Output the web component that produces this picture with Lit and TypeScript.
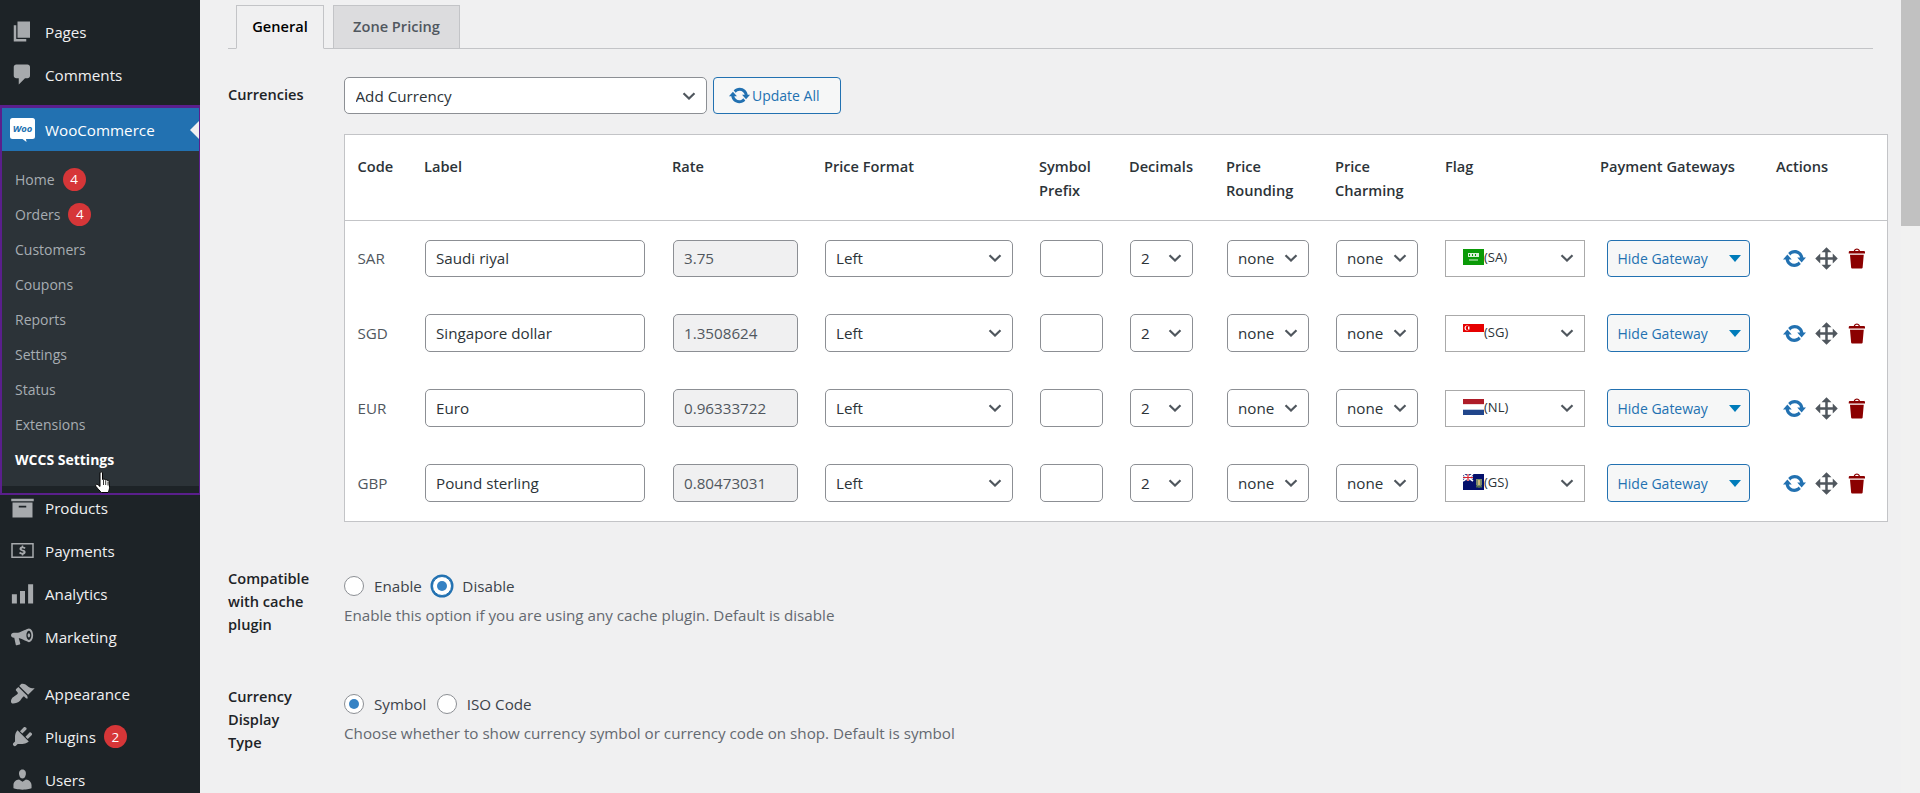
import { LitElement, html, css, svg } from 'lit';
import { customElement } from 'lit/decorators.js';

// dashicons-like glyphs on a 20x20 grid
const ICONS: Record<string, ReturnType<typeof svg>> = {
  pages: svg`<path d="M6 15V2h10v13H6zm-1 1h8v2H3V5h2v11z"/>`,
  comments: svg`<path d="M5 2h9q.82 0 1.41.59T16 4v7q0 .82-.59 1.41T14 13h-2l-5 5v-5H5q-.82 0-1.41-.59T3 11V4q0-.82.59-1.41T5 2z"/>`,
  products: svg`<path d="M1 3h18v2H1zM2 6h16v12H2zm5 2.5V10h6V8.5z" fill-rule="evenodd"/>`,
  payments: svg`<path fill-rule="evenodd" d="M1 4h18v12H1zm1.2 1.2v9.6h15.6V5.2zM10.6 6v.9c.8.1 1.4.4 1.9.8l-.8 1.1c-.5-.4-1-.6-1.6-.6-.5 0-.8.2-.8.5s.3.5 1 .7c1.300.3 2.200.8 2.200 2 0 1-.7 1.700-1.900 1.900V14h-1.200v-.9c-.9-.1-1.700-.5-2.200-1l.9-1.100c.5.500 1.100.8 1.800.8.600 0 .9-.2.900-.6 0-.3-.3-.5-1.100-.7-1.200-.3-2.100-.8-2.100-1.900 0-1 .7-1.700 1.800-1.900V6z"/>`,
  analytics: svg`<path d="M1.500 10.500h4V18h-4zM8 8h4v10H8zM14.500 2.500h4V18h-4z"/>`,
  marketing: svg`<path fill-rule="evenodd" d="M18.500 9c0 3-1.500 5.500-3.400 5.500-.9 0-5-2.500-8.100-3.300l1.200 4.300c.1.400-.1.800-.5.900l-2.200.6c-.4.100-.8-.100-.9-.500L3.400 11H3c-1.200 0-2.200-.9-2.200-2s1-2 2.200-2h3.200c3-.7 7.800-3.500 8.900-3.500 1.900 0 3.400 2.500 3.400 5.500zm-3.400-3.700c-1.100 0-2 1.700-2 3.700s.9 3.700 2 3.700 2-1.700 2-3.700-.9-3.700-2-3.700zm0 2c.6 0 1 .8 1 1.700s-.4 1.700-1 1.700-1-.8-1-1.700.4-1.700 1-1.700z"/>`,
  appearance: svg`<path d="M14.480 11.060L7.410 3.990l1.500-1.500c.5-.56 2.300-.47 3.510.32 1.210.8 1.430 1.280 2.910 2.100 1.180.64 2.450 1.260 4.450.85zm-.71.71L6.700 4.700 4.930 6.470c-.39.39-.39 1.020 0 1.410l1.060 1.060c.39.39.39 1.030 0 1.420-.6.6-1.430 1.110-2.210 1.690-.35.26-.7.53-1.010.84C1.430 13.230.1 16.400 1.200 17.500c1.100 1.100 5.270-.2 6.590-1.540.32-.32.58-.66.84-1.010.58-.78 1.090-1.610 1.690-2.210.39-.39 1.020-.39 1.410 0l1.060 1.060c.39.39 1.020.39 1.410 0z"/>`,
  plugins: svg`<path d="M13.110 4.360L9.870 7.600 8 5.730l3.240-3.240c.35-.34 1.050-.2 1.560.32.52.51.66 1.210.31 1.550zm-8 1.770l.91-1.120 9.010 9.010-1.190.84c-.71.71-2.630 1.160-3.820 1.160H6.140L4.900 17.260c-.59.59-1.540.59-2.120 0-.59-.58-.59-1.530 0-2.120l1.240-1.240v-3.880c0-1.130.4-3.190 1.090-3.890zm7.260 3.970l3.240-3.240c.34-.35 1.040-.21 1.550.31.52.51.66 1.210.31 1.550l-3.240 3.250z"/>`,
  users: svg`<path d="M10 9.250c-2.270 0-2.730-3.440-2.730-3.440C7 4.020 7.820 2 9.970 2c2.160 0 2.980 2.020 2.710 3.810 0 0-.41 3.440-2.680 3.440zm0 2.570L12.720 10c2.390 0 4.520 2.330 4.520 4.530v2.490s-3.650 1.130-7.240 1.130c-3.650 0-7.240-1.130-7.240-1.130v-2.490c0-2.250 1.940-4.480 4.470-4.480z"/>`,
  update: svg`<path d="M10.200 3.280c3.530 0 6.430 2.610 6.920 6h2.080l-3.500 4-3.500-4h2.320c-.45-1.970-2.210-3.440-4.320-3.440-1.450 0-2.730.71-3.540 1.780L4.950 5.660C6.230 4.200 8.110 3.280 10.200 3.280zm-.4 13.440c-3.520 0-6.430-2.610-6.920-6H.8l3.500-4c1.170 1.330 2.330 2.670 3.500 4H5.480c.45 1.970 2.210 3.440 4.320 3.440 1.450 0 2.730-.71 3.540-1.780l1.710 1.950c-1.280 1.460-3.150 2.380-5.250 2.380z"/>`,
  move: svg`<path d="M19 10l-4 4v-3h-4v4h3l-4 4-4-4h3v-4H5v3l-4-4 4-4v3h4V5H6l4-4 4 4h-3v4h4V6z"/>`,
  trash: svg`<path d="M12 4h3c.6 0 1 .4 1 1v1H3V5c0-.6.5-1 1-1h3c.2-1.100 1.300-2 2.500-2s2.300.9 2.500 2zM8 4h3c-.2-.6-.9-1-1.500-1S8.200 3.400 8 4zM4 7h11l-.9 10.100c0 .5-.5.9-1 .9H5.900c-.5 0-.9-.4-1-.9L4 7z"/>`,
};

const icon = (name: string, cls = '') =>
  html`<svg class="ico ${cls}" viewBox="0 0 20 20" fill="currentColor" aria-hidden="true">${ICONS[name]}</svg>`;

const FLAGS: Record<string, ReturnType<typeof svg>> = {
  SA: svg`<rect width="21" height="16" fill="#0a9a07"/><rect x="5" y="4" width="11" height="4" fill="#d7efd6"/><rect x="6" y="5" width="1" height="2" fill="#0a9a07"/><rect x="9" y="5" width="1" height="2" fill="#0a9a07"/><rect x="12" y="5" width="1" height="2" fill="#0a9a07"/><rect x="6" y="10.500" width="9" height="1" fill="#d7efd6"/>`,
  SG: svg`<rect width="21" height="8" fill="#e60000"/><rect y="8" width="21" height="8" fill="#fff"/><circle cx="4" cy="4" r="2.500" fill="#fff"/><circle cx="5" cy="4" r="2.300" fill="#e60000"/><rect x="5" y="2.500" width="1.500" height="3" fill="#fff"/>`,
  NL: svg`<rect width="21" height="5.400" fill="#ae1c28"/><rect y="5.400" width="21" height="5.300" fill="#fff"/><rect y="10.700" width="21" height="5.300" fill="#21468b"/>`,
  GS: svg`<rect width="21" height="16" fill="#04106b"/><path d="M0 0l10 7M10 0L0 7" stroke="#fff" stroke-width="1.600"/><path d="M5 0v7M0 3.500h10" stroke="#fff" stroke-width="2.400"/><path d="M5 0v7M0 3.500h10" stroke="#d8202e" stroke-width="1.200"/><path d="M13 5h6v6l-3 3-3-3z" fill="#7a8a6a"/><path d="M15 6h2v5h-2z" fill="#c9b77a"/><path d="M13 12h6v1.500h-6z" fill="#4f6b4c"/>`,
};

@customElement('wp-sidebar')
class WpSidebar extends LitElement {
  static styles = css`
    :host {
      display: block;
      position: relative;
      width: 200px;
      flex: none;
      height: 793px;
      overflow: hidden;
      background: #1d2327;
      color: #f0f0f1;
      font-size: var(--menu-size);
    }
    .top { padding-top: 10px; }
    .item {
      position: relative;
      display: flex;
      align-items: center;
      height: 43px;
    }
    .item > .slot {
      width: 45px;
      flex: none;
      display: flex;
      justify-content: center;
      color: #a7aaad;
    }
    .ico { width: 25px; height: 25px; display: block; }
    .woo {
      margin-top: 12px;
      background: #2271b1;
      color: #fff;
    }
    .woo .slot { color: #fff; }
    .woo::after {
      content: '';
      position: absolute;
      right: 0;
      top: 50%;
      margin-top: -10px;
      border: 10px solid transparent;
      border-right-color: #f0f0f1;
      border-left-width: 0;
    }
    .logo { width: 25px; height: 25px; display: block; }
    .logo text {
      font: italic 700 9.5px var(--font);
      fill: #2271b1;
    }
    .sub {
      background: #2c3338;
      padding: 10.500px 0 9.500px;
    }
    .sub .row {
      display: flex;
      align-items: center;
      height: 35px;
      padding-left: 15px;
      color: #a7adb2;
      font-size: var(--sub-size);
    }
    .sub .row.on { color: #fff; font-weight: 700; }
    .badge {
      display: inline-flex;
      align-items: center;
      justify-content: center;
      width: 23px;
      height: 23px;
      border-radius: 50%;
      background: #d63638;
      color: #fff;
      font-size: 13.500px;
      margin-left: 8px;
    }
    .gap { height: 14px; }
    .frame {
      position: absolute;
      left: 0;
      top: 105px;
      width: 201px;
      height: 390px;
      box-sizing: border-box;
      border: solid #5a1f8c;
      border-width: 3px 2px 2px 2px;
      pointer-events: none;
    }
    .hand {
      position: absolute;
      left: 95px;
      top: 471px;
      width: 18px;
      height: 23px;
    }
  `;

  private item(name: string, label: string, badge?: string) {
    return html`<div class="item">
      <span class="slot">${icon(name)}</span>
      <span>${label}</span>
      ${badge ? html`<span class="badge">${badge}</span>` : ''}
    </div>`;
  }

  render() {
    const sub = [
      ['Home', '4'], ['Orders', '4'], ['Customers'], ['Coupons'], ['Reports'],
      ['Settings'], ['Status'], ['Extensions'],
    ];
    return html`
      <div class="top">
        ${this.item('pages', 'Pages')}
        ${this.item('comments', 'Comments')}
      </div>
      <div class="item woo">
        <span class="slot">
          <svg class="logo" viewBox="0 0 25 25" aria-hidden="true">
            <path fill="#fff" d="M2.500 1h20A2.500 2.500 0 0 1 25 3.500v16a2.500 2.500 0 0 1-2.500 2.500H16l.5 3-4-3H2.500A2.500 2.500 0 0 1 0 19.500v-16A2.500 2.500 0 0 1 2.500 1z"/>
            <text x="12.500" y="15" text-anchor="middle">Woo</text>
          </svg>
        </span>
        <span>WooCommerce</span>
      </div>
      <div class="sub">
        ${sub.map(([l, b]) => html`<div class="row">${l}${b ? html`<span class="badge">${b}</span>` : ''}</div>`)}
        <div class="row on">WCCS Settings</div>
      </div>
      ${this.item('products', 'Products')}
      ${this.item('payments', 'Payments')}
      ${this.item('analytics', 'Analytics')}
      ${this.item('marketing', 'Marketing')}
      <div class="gap"></div>
      ${this.item('appearance', 'Appearance')}
      ${this.item('plugins', 'Plugins', '2')}
      ${this.item('users', 'Users')}
      <div class="frame"></div>
      <svg class="hand" viewBox="0 0 18 23" aria-hidden="true">
        <path fill="#fff" stroke="#000" stroke-width="1" stroke-linejoin="round"
          d="M5 2c0-1.600 2.500-1.600 2.500 0v6.500l1-.2c.8-.2 1.500 0 1.700.6.8-.4 1.700-.2 2 .5.900-.3 1.800.1 1.900 1l.4 6c0 2-.6 3.500-1.500 5.100H6.500C5 20 3 18 1 15.500c-.7-1-.4-2 .5-2.200.8-.2 2 .7 3.500 2.200z"/>
        <path stroke="#000" stroke-width=".8" d="M8.500 9v5M10.700 9.500v4.500M13 10.500v4"/>
      </svg>
    `;
  }
}

const CHEVRON = css`url("data:image/svg+xml,%3Csvg xmlns='http://www.w3.org/2000/svg' viewBox='0 0 14 8'%3E%3Cpath d='M1.500 1.200 7 6.500l5.500-5.300' fill='none' stroke='%2350575e' stroke-width='2.200'/%3E%3C/svg%3E")`;

type Currency = { code: string; label: string; rate: string; flag: string };

const CURRENCIES: Currency[] = [
  { code: 'SAR', label: 'Saudi riyal', rate: '3.75', flag: 'SA' },
  { code: 'SGD', label: 'Singapore dollar', rate: '1.3508624', flag: 'SG' },
  { code: 'EUR', label: 'Euro', rate: '0.96333722', flag: 'NL' },
  { code: 'GBP', label: 'Pound sterling', rate: '0.80473031', flag: 'GS' },
];

@customElement('currency-table')
class CurrencyTable extends LitElement {
  static styles = css`
    :host {
      display: block;
      width: 1544px;
      background: #fff;
      border: 1px solid #c3c4c7;
      box-sizing: border-box;
    }
    table {
      width: 100%;
      table-layout: fixed;
      border-collapse: collapse;
    }
    th {
      height: 86px;
      padding: 19px 0 0 12.500px;
      box-sizing: border-box;
      vertical-align: top;
      text-align: left;
      font-weight: 600;
      color: #2c3338;
      line-height: 24px;
      font-size: var(--head-size);
      border-bottom: 1px solid #c3c4c7;
    }
    td {
      height: 75px;
      padding: 0 0 0 12.500px;
      box-sizing: border-box;
      color: #50575e;
      vertical-align: middle;
    }
    input, select {
      display: block;
      box-sizing: border-box;
      height: 37.500px;
      margin: 0 0 0 1px;
      padding: 0 0 0 10px;
      font: inherit;
      color: #2c3338;
      background: #fff;
      border: 1px solid #8c8f94;
      border-radius: 5px;
      outline: none;
    }
    input[readonly] { background: #f0f0f1; color: #50575e; }
    select {
      appearance: none;
      background: #fff ${CHEVRON} no-repeat right 10px center / 14px 8px;
    }
    .w-label { width: 219.500px; }
    .w-rate { width: 125px; }
    .w-format { width: 188px; }
    .w-symbol { width: 62.500px; }
    .w-dec { width: 63px; }
    .w-round { width: 82px; }
    .flag {
      display: flex;
      align-items: center;
      width: 140px;
      height: 37px;
      box-sizing: border-box;
      padding: 0 10px 2px 17px;
      border: 1px solid #aaa;
      color: #2c3338;
      font-size: var(--small-size);
    }
    .flag svg.f { width: 21px; height: 16px; flex: none; }
    .flag svg.c { width: 14px; height: 8px; margin: 2px 0 0 auto; flex: none; }
    .gate {
      display: flex;
      align-items: center;
      justify-content: space-between;
      width: 143px;
      height: 37.500px;
      margin-left: 7px;
      box-sizing: border-box;
      padding: 0 8px 0 9.500px;
      border: 1px solid #2271b1;
      border-radius: 4px;
      background: #f6f7f7;
      color: #2271b1;
      font-size: var(--gate-size);
    }
    .caret {
      width: 0;
      height: 0;
      border: 6.500px solid transparent;
      border-top: 7px solid #007cba;
      border-bottom: 0;
    }
    .acts {
      display: flex;
      align-items: center;
      gap: 6.500px;
      margin-left: 6px;
    }
    .ico { width: 25px; height: 25px; display: block; }
    .blue { color: #2271b1; }
    .grey { color: #50575e; }
    .red { color: #8b0000; }
  `;

  private row(c: Currency) {
    const opt = (v: string) => html`<option>${v}</option>`;
    return html`<tr>
      <td>${c.code}</td>
      <td><input class="w-label" .value=${c.label} /></td>
      <td><input class="w-rate" readonly .value=${c.rate} /></td>
      <td><select class="w-format">${opt('Left')}</select></td>
      <td><input class="w-symbol" /></td>
      <td><select class="w-dec">${opt('2')}</select></td>
      <td><select class="w-round">${opt('none')}</select></td>
      <td><select class="w-round">${opt('none')}</select></td>
      <td>
        <div class="flag">
          <svg class="f" viewBox="0 0 21 16" aria-hidden="true">${FLAGS[c.flag]}</svg>
          <span>(${c.flag})</span>
          <svg class="c" viewBox="0 0 14 8" aria-hidden="true"><path d="M1.500 1.200 7 6.500l5.500-5.300" fill="none" stroke="#50575e" stroke-width="2.200"/></svg>
        </div>
      </td>
      <td><div class="gate"><span>Hide Gateway</span><span class="caret"></span></div></td>
      <td>
        <div class="acts">
          ${icon('update', 'blue')}${icon('move', 'grey')}${icon('trash', 'red')}
        </div>
      </td>
    </tr>`;
  }

  render() {
    const widths = [66.5, 248, 152, 215, 90, 97, 109, 110, 155, 176, 123.5];
    return html`<table>
      <colgroup>${widths.map((w) => html`<col style="width:${w}px" />`)}</colgroup>
      <thead>
        <tr>
          <th>Code</th><th>Label</th><th>Rate</th><th>Price Format</th>
          <th>Symbol<br />Prefix</th><th>Decimals</th><th>Price<br />Rounding</th>
          <th>Price<br />Charming</th><th>Flag</th><th>Payment Gateways</th><th>Actions</th>
        </tr>
      </thead>
      <tbody>${CURRENCIES.map((c) => this.row(c))}</tbody>
    </table>`;
  }
}

@customElement('app-root')
export class AppRoot extends LitElement {
  static styles = css`
    :host {
      --font: 'Open Sans', 'Noto Sans', sans-serif;
      --menu-size: 15.2px;
      --sub-size: 14px;
      --body-size: 15.2px;
      --head-size: 14.6px;
      --small-size: 13px;
      --gate-size: 14px;
      display: flex;
      height: 793px;
      overflow: hidden;
      background: #f0f0f1;
      color: #3c434a;
      font-family: var(--font);
      font-size: var(--body-size);
    }
    main {
      flex: 1;
      min-width: 0;
      padding: 5px 0 0 28px;
    }
    .tabs {
      display: flex;
      gap: 9px;
      width: 1645px;
      height: 44px;
      box-sizing: border-box;
      padding-left: 8px;
      border-bottom: 1px solid #c3c4c7;
    }
    .tab {
      display: flex;
      align-items: center;
      justify-content: center;
      height: 44px;
      box-sizing: border-box;
      padding-bottom: 2px;
      border: 1px solid #c3c4c7;
      background: #dcdcde;
      color: #50575e;
      font-weight: 600;
      font-size: var(--head-size);
    }
    .tab.on {
      width: 88px;
      background: #f0f0f1;
      color: #000;
      border-bottom-color: #f0f0f1;
    }
    .tab.off { width: 127px; }
    .field {
      display: grid;
      grid-template-columns: 116px auto;
    }
    .name {
      font-weight: 600;
      color: #1d2327;
      font-size: var(--head-size);
      line-height: 23px;
    }
    .add {
      display: flex;
      gap: 6px;
      height: 37px;
      margin-bottom: 19.500px;
    }
    .add select {
      appearance: none;
      width: 363px;
      height: 37px;
      box-sizing: border-box;
      padding: 0 0 0 10.500px;
      font: inherit;
      color: #2c3338;
      border: 1px solid #8c8f94;
      border-radius: 5px;
      background: #fff ${CHEVRON} no-repeat right 10px center / 14px 8px;
    }
    .update {
      display: flex;
      align-items: center;
      gap: 1px;
      width: 128px;
      box-sizing: border-box;
      padding-left: 14px;
      border: 1px solid #2271b1;
      border-radius: 4px;
      background: #f6f7f7;
      color: #2271b1;
      font-size: var(--gate-size);
    }
    .update svg { width: 23px; height: 23px; flex: none; }
    .radios {
      display: flex;
      align-items: center;
      height: 23px;
    }
    .radios label {
      display: flex;
      align-items: center;
      gap: 10px;
      margin-right: 10.500px;
    }
    input[type='radio'] {
      appearance: none;
      width: 20px;
      height: 20px;
      margin: 0;
      background: #fff;
      border: 1px solid #8c8f94;
      border-radius: 50%;
      display: grid;
      place-content: center;
    }
    input[type='radio']:checked::before {
      content: '';
      width: 10px;
      height: 10px;
      border-radius: 50%;
      background: #3582c4;
    }
    input.ring {
      border-color: #2271b1;
      box-shadow: 0 0 0 1.500px #2271b1;
    }
    .desc {
      margin: 7px 0 0;
      color: #646970;
    }
    .f1 { margin-top: 28px; }
    .f2 { margin-top: 45px; }
    .f2 .radios, .f3 .radios { margin-top: 8px; }
    .f3 { margin-top: 49px; }
    .bar {
      width: 19px;
      flex: none;
      background: #f1f1f1;
    }
    .bar div { height: 226px; background: #c1c1c1; }
  `;

  render() {
    return html`
      <wp-sidebar></wp-sidebar>
      <main>
        <div class="tabs">
          <div class="tab on">General</div>
          <div class="tab off">Zone Pricing</div>
        </div>
        <div class="field f1">
          <div class="name" style="padding-top:6px">Currencies</div>
          <div>
            <div class="add">
              <select><option>Add Currency</option></select>
              <div class="update">
                <svg viewBox="0 0 20 20" fill="currentColor" aria-hidden="true">${ICONS.update}</svg>
                <span>Update All</span>
              </div>
            </div>
            <currency-table></currency-table>
          </div>
        </div>
        <div class="field f2">
          <div class="name">Compatible<br />with cache<br />plugin</div>
          <div>
            <div class="radios">
              <label><input type="radio" name="cache" />Enable</label>
              <label><input class="ring" type="radio" name="cache" checked />Disable</label>
            </div>
            <p class="desc">Enable this option if you are using any cache plugin. Default is disable</p>
          </div>
        </div>
        <div class="field f3">
          <div class="name">Currency<br />Display<br />Type</div>
          <div>
            <div class="radios">
              <label><input type="radio" name="display" checked />Symbol</label>
              <label><input type="radio" name="display" />ISO Code</label>
            </div>
            <p class="desc">Choose whether to show currency symbol or currency code on shop. Default is symbol</p>
          </div>
        </div>
      </main>
      <div class="bar"><div></div></div>
    `;
  }
}
